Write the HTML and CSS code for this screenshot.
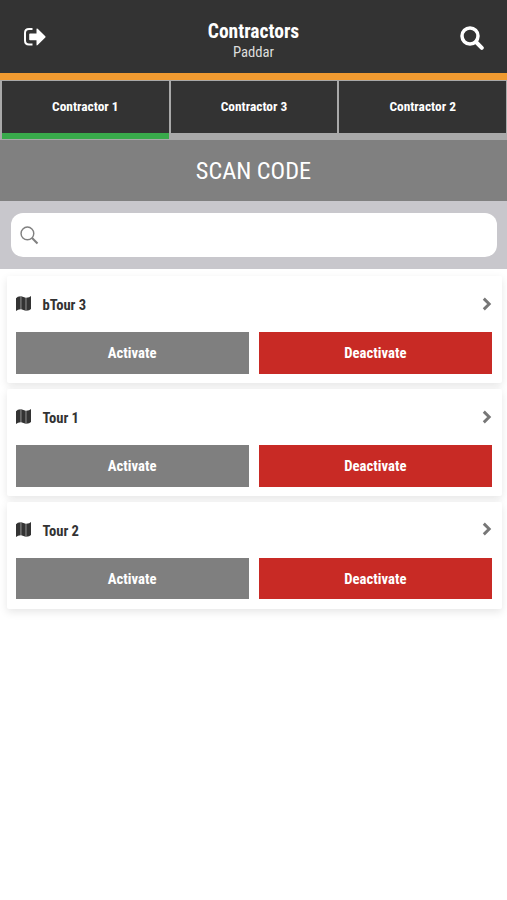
FILE: index.html
```html
<!DOCTYPE html>
<html lang="en">
<head>
<meta charset="utf-8">
<title>Contractors</title>
<link rel="stylesheet" href="styles.css">
</head>
<body>
<svg class="defs" width="0" height="0" aria-hidden="true">
  <symbol id="map" viewBox="0 0 16 16" preserveAspectRatio="none"><path d="M0 2.300Q1.500.5 4.900.3V14.200Q2 14.300 0 16ZM5.600.3 10.300 1.800V15.700L5.600 14.200ZM11 1.800Q14.500 1.700 16 0V13.800Q14.500 15.500 11 15.700Z"/><path d="M4.800.3h.9v13.900h-.9ZM10.200 1.800h.9v13.900h-.9Z" opacity=".65"/></symbol>
  <symbol id="chevron" viewBox="0 0 10 14"><path d="m1.800 1.600 5.400 5.400-5.400 5.400" fill="none" stroke="currentColor" stroke-width="2.900"/></symbol>
</svg>
<header class="header">
  <svg class="exit" viewBox="0 0 24 20"><path d="M9.500 2H6Q2 2 2 6v7.500q0 4 4 4h3.500" fill="none" stroke="currentColor" stroke-width="2"/><path d="M7 6.500h6.500V2.300q0-1.500 1.200-.5l7.600 7.400q.7.700 0 1.400l-7.600 7.400q-1.200 1-1.200-.5v-4.300H7q-.8 0-.8-.8V7.300q0-.8.8-.8Z" fill="currentColor"/></svg>
  <div class="titles">
    <h1><span class="text">Contractors</span></h1>
    <p><span class="text">Paddar</span></p>
  </div>
  <svg class="find" viewBox="0 0 24 24"><circle cx="10" cy="10" r="8" fill="none" stroke="currentColor" stroke-width="3.500"/><path d="m16 16 5.800 5.800" stroke="currentColor" stroke-width="4" stroke-linecap="round"/></svg>
</header>
<nav class="tabs">
  <a class="tab active"><span class="text">Contractor 1</span></a>
  <a class="tab"><span class="text">Contractor 3</span></a>
  <a class="tab"><span class="text">Contractor 2</span></a>
</nav>
<div class="scan"><span class="text">SCAN CODE</span></div>
<div class="search"><div class="field"><svg viewBox="0 0 20 20"><circle cx="7.800" cy="7.800" r="6.700" fill="none" stroke="currentColor" stroke-width="1.500"/><path d="m12.700 12.700 5.700 5.700" stroke="currentColor" stroke-width="2.200"/></svg></div></div>
<main class="list">
  <article class="card">
    <div class="row"><svg class="map"><use href="#map"/></svg><h2><span class="text">bTour 3</span></h2><svg class="chevron"><use href="#chevron"/></svg></div>
    <div class="actions"><div class="button"><span class="text">Activate</span></div><div class="button danger"><span class="text">Deactivate</span></div></div>
  </article>
  <article class="card">
    <div class="row"><svg class="map"><use href="#map"/></svg><h2><span class="text">Tour 1</span></h2><svg class="chevron"><use href="#chevron"/></svg></div>
    <div class="actions"><div class="button"><span class="text">Activate</span></div><div class="button danger"><span class="text">Deactivate</span></div></div>
  </article>
  <article class="card">
    <div class="row"><svg class="map"><use href="#map"/></svg><h2><span class="text">Tour 2</span></h2><svg class="chevron"><use href="#chevron"/></svg></div>
    <div class="actions"><div class="button"><span class="text">Activate</span></div><div class="button danger"><span class="text">Deactivate</span></div></div>
  </article>
</main>
</body>
</html>
```
FILE: styles.css
```css
* { box-sizing: border-box; }
body { margin: 0; min-height: 900px; background: #fff; color: #333; font-family: "Roboto Condensed", Roboto, sans-serif; font-stretch: 75%; }
h1, h2, p { margin: 0; }
svg { display: block; flex: none; }
.defs { position: absolute; }
.text { display: inline-block; white-space: nowrap; }
.header { display: flex; align-items: flex-start; justify-content: space-between; height: 80px; padding: 0 23px; background: #333; border-bottom: 7px solid #f09a30; color: #fff; }
.exit { width: 24px; height: 20px; margin-top: 27px; }
.find { width: 24px; height: 24px; margin-top: 26px; }
.titles { text-align: center; padding-top: 21px; }
h1 { font-size: 19.500px; line-height: 22px; font-weight: 700; }
p { font-size: 14.700px; line-height: 18px; color: #ddd; }
.tabs { display: grid; grid-template-columns: repeat(3, 1fr); gap: 2px; height: 60px; padding: 1px 1px 1px 2px; background: #a9a9a9; }
.tab { display: flex; align-items: center; justify-content: center; padding-bottom: 2px; background: #333; background-clip: padding-box; border-bottom: 6px solid #a9a9a9; color: #fff; font-size: 13.400px; font-weight: 700; }
.tab.active { border-bottom-color: #39aa4b; }
.scan { display: flex; align-items: center; justify-content: center; height: 61px; padding-bottom: 1px; background: #808080; color: #fff; font-size: 24.300px; font-weight: 400; }
.search { height: 68px; padding: 12px 10px 12px 11px; background: #c8c7cc; }
.field { display: flex; align-items: center; height: 44px; padding-left: 9px; border-radius: 12px; background: #fff; color: #808080; }
.field svg { width: 19px; height: 19px; }
.list { display: flex; flex-direction: column; gap: 6px; padding: 7.300px 5px 0 6.500px; }
.card { height: 106.800px; padding: 15px 10px 0 9px; background: #fff; border-radius: 2px; box-shadow: 0 3px 9px rgba(0, 0, 0, .1); }
.row { display: flex; align-items: center; height: 26px; }
.map { width: 15px; height: 15px; margin-bottom: 1px; fill: #333; }
h2 { flex: 1; margin-left: 12px; padding-top: 2px; font-size: 14.600px; line-height: 18px; font-weight: 700; }
.chevron { width: 10px; height: 14px; margin-bottom: 1px; color: #777; }
.actions { display: grid; grid-template-columns: 1fr 1fr; gap: 10px; margin-top: 15px; }
.button { display: flex; align-items: center; justify-content: center; height: 41.500px; background: #7f7f7f; color: #fff; font-size: 14.700px; font-weight: 700; }
.danger { background: #c82a25; }
```
